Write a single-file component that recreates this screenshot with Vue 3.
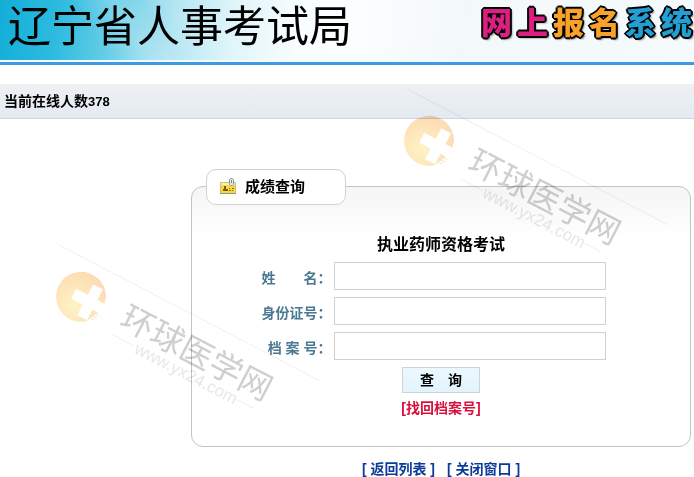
<template>
  <div class="page">
    <header class="banner">
      <h1 class="bureau">辽宁省人事考试局</h1>
      <div class="system-name">
        <span v-for="(item, index) in systemName" :key="index" :class="item.color">{{ item.char }}</span>
      </div>
    </header>

    <div class="online-bar">当前在线人数<span class="count">{{ onlineCount }}</span></div>

    <main class="content">
      <section class="panel">
        <div class="panel-tab">
          <svg class="card-icon" width="18" height="18" viewBox="0 0 18 18">
            <path d="M1.500 4.500h15v11h-15z" fill="#f7d93c" stroke="#c4bd92" />
            <path d="M2 5h14v2H2z" fill="#fdf0a0" />
            <path d="M1 15.500h16" stroke="#8f948f" />
            <path d="M5 8h2v3h2v2H4v-2h1z" fill="#7b5b10" />
            <path d="M10 10.500h1M13 10.500h2M10 12.500h2M13 12.500h1" stroke="#8a6b1c" />
            <path d="M10.500 1.500l1-1h2l1 1v5l-1 1h-2l-1-1z" fill="#dfe6ee" stroke="#8b98a8" />
            <path d="M12.500 2v3" stroke="#76869a" />
          </svg>
          <h2>成绩查询</h2>
        </div>

        <form class="query-form" @submit.prevent>
          <h3 class="exam-name">执业药师资格考试</h3>

          <div v-for="field in fields" :key="field.id" class="form-row">
            <label :for="field.id">{{ field.label }}</label>
            <input :id="field.id" v-model="form[field.id]" type="text" />
          </div>

          <button type="submit" class="query-button">查　询</button>
          <a href="#" class="find-link">[找回档案号]</a>
        </form>
      </section>

      <nav class="bottom-links">
        <a href="#">[ 返回列表 ]</a>
        <a href="#">[ 关闭窗口 ]</a>
      </nav>
    </main>

    <!-- 水印 -->
    <svg
      v-for="mark in watermarks"
      :key="mark"
      :class="['watermark', mark]"
      width="290"
      height="200"
      viewBox="-50 -60 290 200"
      aria-hidden="true"
    >
      <defs>
        <radialGradient :id="mark + '-sun'" cx="0.45" cy="0.7" r="0.65">
          <stop offset="0" stop-color="#fff3c4" />
          <stop offset="1" stop-color="#fcdcb4" />
        </radialGradient>
      </defs>
      <g transform="rotate(27.5)">
        <path d="M-43 -36H250M45 19H68M186 19H204" stroke="#f1f1f1" />
        <path d="M22 -12A25 25 0 1 0 16 19L25 0Z" :fill="'url(#' + mark + '-sun)'" />
        <path d="M5 -17h11v12h12v11h-12v12h-11v-12h-13v-11h13z" fill="#fff" />
        <path d="M18 9l7-1M18 12l6-1M18 15l4-1" stroke="#fbe3c4" />
        <text class="mark-name" x="46" y="8">环球医学网</text>
        <text class="mark-url" x="72" y="25">www.yx24.com</text>
      </g>
    </svg>
  </div>
</template>

<script setup>
import { ref, reactive } from 'vue'

const onlineCount = ref(378)

const systemName = [
  { char: '网', color: 'pink' },
  { char: '上', color: 'pink' },
  { char: '报', color: 'orange' },
  { char: '名', color: 'orange' },
  { char: '系', color: 'blue' },
  { char: '统', color: 'blue' }
]

// 查询表单
const fields = [
  { id: 'name', label: '姓　　名：' },
  { id: 'idCard', label: '身份证号：' },
  { id: 'fileNo', label: '档 案 号：' }
]

const form = reactive({
  name: '',
  idCard: '',
  fileNo: ''
})

const watermarks = ['mark-right', 'mark-left']
</script>

<style>
body {
  margin: 0;
  background: #fff;
}
</style>

<style scoped>
.page {
  position: relative;
  font-family: "Liberation Sans", "Noto Sans CJK SC", sans-serif;
  font-size: 14px;
  font-weight: bold;
  line-height: 20px;
  color: #000;
}

h1,
h2,
h3 {
  margin: 0;
}

a {
  text-decoration: none;
}

.banner {
  display: flex;
  justify-content: space-between;
  height: 62px;
  border-bottom: 3px solid #4199df;
  background:
    linear-gradient(to bottom, transparent 60px, #effbfe 60px),
    linear-gradient(55deg, transparent 95px, rgba(255, 255, 255, 0.15) 125px, transparent 150px),
    linear-gradient(98deg, #12aed8 0, #2dbbdf 60px, #6fd0e7 120px, #b4e6f2 175px, #e0f5fa 235px, #f8fdfe 300px, #fbfefe 360px, #f3f8fb 460px, #f5fafc 100%);
}

.bureau {
  padding-left: 8px;
  font-family: "AR PL UKai CN", KaiTi, "Noto Sans CJK SC", serif;
  font-size: 43px;
  font-weight: normal;
  line-height: 46px;
  white-space: nowrap;
}

.system-name {
  display: flex;
  gap: 5px;
  padding-right: 2px;
  font-size: 31px;
  font-weight: 900;
  line-height: 48px;
  text-shadow:
    -1px -1px 0 #000,
    1px -1px 0 #000,
    -1px 1px 0 #000,
    1px 1px 0 #000,
    -2px 0 0 #000,
    2px 0 0 #000,
    0 -2px 0 #000,
    0 2px 0 #000,
    2px 2px 2px #555;
}

.pink {
  color: #dc1f82;
}

.orange {
  color: #f9a12b;
}

.blue {
  color: #239fd3;
}

.online-bar {
  height: 20px;
  margin-top: 19px;
  padding: 7px 4px;
  border-bottom: 1px solid #ccd6dd;
  background: linear-gradient(#eef1f3, #e3eaf2);
}

.count {
  font-size: 13px;
}

.content {
  margin: 50px 3px 0 191px;
}

.panel {
  position: relative;
  margin-top: 67px;
  padding: 48px 0 28px;
  border: 1px solid #c3c3c3;
  border-radius: 12px;
  background: linear-gradient(#f5f5f5, #fff 52px);
}

.panel-tab {
  position: absolute;
  top: -18px;
  left: 14px;
  display: flex;
  align-items: center;
  gap: 8px;
  box-sizing: border-box;
  width: 140px;
  height: 36px;
  padding-left: 12px;
  border: 1px solid #d2d2d2;
  border-radius: 10px;
  background: #fff;
}

.panel-tab h2 {
  font-size: 15px;
  line-height: 20px;
}

.query-form {
  display: flex;
  flex-direction: column;
  align-items: center;
}

.exam-name {
  margin-bottom: 7px;
  font-size: 16px;
  line-height: 20px;
}

.form-row {
  display: grid;
  grid-template-columns: 28% minmax(0, 272px);
  gap: 3px;
  align-items: center;
  width: 100%;
  margin-bottom: 7px;
}

.form-row label {
  padding-top: 4px;
  color: #4b7893;
  text-align: right;
  white-space: nowrap;
}

.form-row input {
  box-sizing: border-box;
  width: 100%;
  height: 28px;
  padding: 0 4px;
  border: 1px solid #d0d0d0;
  background: #fff;
  font: inherit;
}

.query-button {
  width: 78px;
  height: 26px;
  margin-bottom: 5px;
  padding: 0;
  border: 1px solid #cdd3d6;
  background: linear-gradient(#ecf8fe, #e1f4fd);
  color: #000;
  font: inherit;
  cursor: pointer;
}

.find-link {
  color: #d8103c;
}

.bottom-links {
  display: flex;
  justify-content: center;
  gap: 12px;
  padding: 12px 0 0;
}

.bottom-links a {
  color: #0b3c9c;
}

.watermark {
  position: absolute;
  pointer-events: none;
  mix-blend-mode: multiply;
}

.mark-right {
  top: 81px;
  left: 379px;
}

.mark-left {
  top: 237px;
  left: 31px;
}

.mark-name {
  fill: #cfcfcf;
  font-size: 33px;
  font-weight: normal;
}

.mark-url {
  fill: #e8e8e8;
  font-size: 17px;
  font-weight: normal;
}
</style>
